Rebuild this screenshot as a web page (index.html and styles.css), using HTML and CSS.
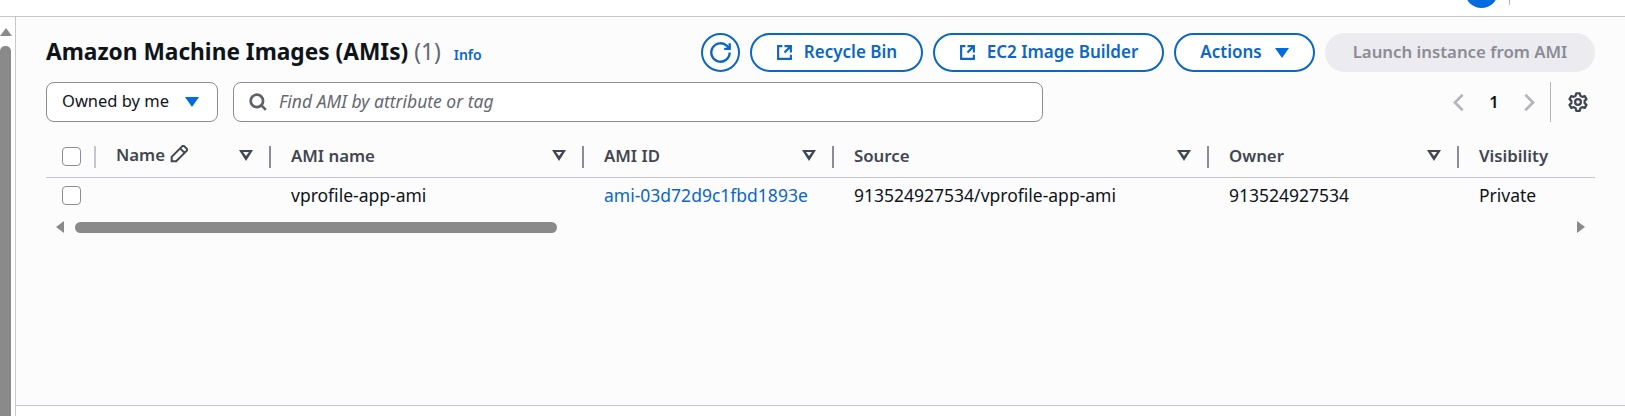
FILE: index.html
```html
<!DOCTYPE html>
<html lang="en">
    <head>
        <meta charset="UTF-8" />
        <meta name="viewport" content="width=device-width, initial-scale=1.0" />
        <title>Amazon Machine Images</title>
        <link rel="stylesheet" href="styles.css">
    </head>
    <body>
        <div class="topbar">
            <span class="avatar"></span>
            <span class="topbar-sep"></span>
        </div>

        <div class="content">
            <div class="page-scroll">
                <span class="arrow-up"></span>
                <span class="page-thumb"></span>
            </div>

            <div class="page">
                <main class="panel">
                    <div class="panel-head">
                        <h1 class="title">Amazon Machine Images (AMIs) <span class="count">(1)</span></h1>
                        <a class="info" href="#">Info</a>
                        <div class="actions">
                            <button class="btn btn-round" aria-label="Refresh">
                                <svg class="icon-refresh" viewBox="0 0 16 16"><path d="M15 8a7 7 0 1 1-2.100-5L15 5"/><path d="M15 1v4.200h-4.200"/></svg>
                            </button>
                            <button class="btn btn-recycle">
                                <svg class="icon" viewBox="0 0 16 16"><path d="M14 8V2H8M14 2 8 8M6 2H2v12h12v-4"/></svg>
                                Recycle Bin
                            </button>
                            <button class="btn btn-builder">
                                <svg class="icon" viewBox="0 0 16 16"><path d="M14 8V2H8M14 2 8 8M6 2H2v12h12v-4"/></svg>
                                EC2 Image Builder
                            </button>
                            <button class="btn btn-actions">Actions <span class="caret"></span></button>
                            <button class="btn btn-launch" disabled>Launch instance from AMI</button>
                        </div>
                    </div>

                    <div class="toolbar">
                        <button class="select">Owned by me <span class="caret"></span></button>
                        <div class="search">
                            <svg class="search-icon" viewBox="0 0 16 16"><circle cx="7" cy="7" r="5.500"/><path d="m11 11 4 4"/></svg>
                            <span class="search-text">Find AMI by attribute or tag</span>
                        </div>
                        <div class="pager">
                            <svg class="chevron" viewBox="0 0 16 16"><path d="M11.500 1.500 5 8l6.500 6.500"/></svg>
                            <span class="page-num">1</span>
                            <svg class="chevron" viewBox="0 0 16 16"><path d="M4.500 1.500 11 8l-6.500 6.500"/></svg>
                        </div>
                        <div class="settings">
                            <svg class="gear" viewBox="0 0 16 16"><path d="M6.600 1h2.800l.5 2 1.500.9 2-.6 1.400 2.400-1.500 1.400v1.800l1.500 1.400-1.400 2.400-2-.6-1.500.9-.5 2H6.600l-.5-2-1.500-.9-2 .6-1.400-2.400 1.500-1.400V7.100L1.200 5.700l1.400-2.400 2 .6 1.500-.9z" stroke-linejoin="round"/><circle cx="8" cy="8" r="2.300"/></svg>
                        </div>
                    </div>

                    <div class="table">
                        <div class="th th-check"><span class="checkbox"></span></div>
                        <div class="th th-name">
                            <span class="th-label">Name
                                <svg class="pencil" viewBox="0 0 16 16"><path d="M1.500 14.500v-4L10.800 1.200a1.400 1.400 0 0 1 2 0l2 2a1.400 1.400 0 0 1 0 2L5.500 14.500zM9 3l4 4"/></svg>
                            </span>
                            <span class="filter"></span>
                        </div>
                        <div class="th"><span class="th-label">AMI name</span><span class="filter"></span></div>
                        <div class="th"><span class="th-label">AMI ID</span><span class="filter"></span></div>
                        <div class="th"><span class="th-label">Source</span><span class="filter"></span></div>
                        <div class="th"><span class="th-label">Owner</span><span class="filter"></span></div>
                        <div class="th th-last"><span class="th-label">Visibility</span></div>

                        <div class="td td-check"><span class="checkbox"></span></div>
                        <div class="td"></div>
                        <div class="td">vprofile-app-ami</div>
                        <div class="td"><a class="link" href="#">ami-03d72d9c1fbd1893e</a></div>
                        <div class="td">913524927534/vprofile-app-ami</div>
                        <div class="td">913524927534</div>
                        <div class="td">Private</div>
                    </div>

                    <div class="table-scroll">
                        <span class="arrow-left"></span>
                        <div class="table-track"><span class="table-thumb"></span></div>
                        <span class="arrow-right"></span>
                    </div>
                </main>
            </div>
        </div>
    </body>
</html>
```

FILE: styles.css
```css
* {
    box-sizing: border-box;
}

body {
    margin: 0;
    height: 416px;
    overflow: hidden;
    display: flex;
    flex-direction: column;
    background: #fff;
    color: #0f141a;
    font-family: "Noto Sans", "Open Sans", sans-serif;
    font-size: 17.5px;
}

svg {
    fill: none;
    stroke: currentColor;
    stroke-width: 2;
}

/* top strip */
.topbar {
    height: 17px;
    flex: none;
    display: flex;
    justify-content: flex-end;
    padding-right: 115px;
    border-bottom: 1px solid #c6c6cd;
    overflow: hidden;
}
.avatar {
    width: 33px;
    height: 33px;
    margin-top: -25px;
    border-radius: 50%;
    background: #006ce0;
}
.topbar-sep {
    width: 1px;
    height: 5px;
    margin-left: 11px;
    background: #b4b4bb;
}

.content {
    flex: 1;
    min-height: 0;
    display: flex;
}

/* page scrollbar */
.page-scroll {
    width: 15px;
    flex: none;
    display: flex;
    flex-direction: column;
    padding-top: 11px;
    overflow: hidden;
}
.arrow-up {
    width: 0;
    height: 0;
    border-left: 6px solid transparent;
    border-right: 6px solid transparent;
    border-bottom: 8px solid #8a8a8a;
}
.page-thumb {
    width: 11px;
    flex: 1;
    margin-top: 10px;
    border-radius: 5px 5px 0 0;
    background: #8a8a8a;
}

.page {
    flex: 1;
    min-width: 0;
    border-left: 1px solid #c6c6cd;
}

.panel {
    height: 389px;
    padding: 16px 30px 0 30px;
    background: #fcfcfd;
    border-bottom: 1px solid #c6c6cd;
}

/* heading row */
.panel-head {
    display: flex;
    align-items: center;
    height: 39px;
}
.title {
    margin: 0;
    font-size: 22.7px;
    font-weight: 700;
    line-height: 37px;
    padding-bottom: 2px;
    white-space: nowrap;
}
.count {
    font-weight: 400;
    color: #656871;
}
.info {
    margin-left: 13px;
    margin-top: 3px;
    font-size: 14px;
    font-weight: 600;
    color: #0b67c2;
    text-decoration: none;
}
.actions {
    margin-left: auto;
    display: flex;
    gap: 10px;
}
.btn {
    height: 39px;
    padding: 0 0 3px;
    display: flex;
    align-items: center;
    justify-content: center;
    gap: 10px;
    border: 2px solid #0b67c2;
    border-radius: 20px;
    background: #fff;
    color: #0b67c2;
    font: 600 17px "Noto Sans", sans-serif;
    white-space: nowrap;
}
.btn-round {
    width: 39px;
    padding: 0;
    border-radius: 50%;
}
.btn-recycle {
    width: 173px;
}
.btn-builder {
    width: 231px;
}
.btn-actions {
    width: 141px;
    gap: 13px;
}
.btn-launch {
    width: 270px;
    border: none;
    background: #ebebf0;
    color: #8c8c94;
    font-size: 16.8px;
}
.btn .icon,
.btn .caret {
    margin-top: 3px;
}
.icon {
    width: 17px;
    height: 17px;
    margin-right: 1px;
}
.icon-refresh {
    width: 21px;
    height: 21px;
    stroke-width: 1.800;
}
.caret {
    width: 0;
    height: 0;
    border-left: 7px solid transparent;
    border-right: 7px solid transparent;
    border-top: 10px solid #006ce0;
}

/* filter row */
.toolbar {
    display: flex;
    align-items: center;
    height: 40px;
    margin-top: 10px;
}
.select {
    width: 172px;
    height: 40px;
    display: flex;
    align-items: center;
    gap: 16px;
    padding: 0 0 3px 15px;
    border: 1px solid #8c8c94;
    border-radius: 8px;
    background: #fff;
    color: #0f141a;
    font: 16.5px "Noto Sans", sans-serif;
    white-space: nowrap;
}
.select .caret {
    margin-top: 3px;
}
.search {
    width: 810px;
    height: 40px;
    margin-left: 15px;
    display: flex;
    align-items: center;
    gap: 12px;
    padding-left: 15px;
    border: 1px solid #8c8c94;
    border-radius: 8px;
    background: #fff;
}
.search-icon {
    width: 18px;
    height: 18px;
    color: #5f6168;
    stroke-width: 2.400;
}
.search-text {
    padding-bottom: 3px;
    font-style: italic;
    color: #656871;
}
.pager {
    margin-left: auto;
    display: flex;
    align-items: center;
    gap: 20px;
    padding-right: 11px;
    color: #b4b4bb;
}
.chevron {
    width: 19px;
    height: 19px;
    stroke-width: 2.200;
}
.page-num {
    font-weight: 600;
    font-size: 16.5px;
    color: #0f141a;
    width: 12px;
    padding-bottom: 2px;
    text-align: center;
}
.settings {
    height: 40px;
    width: 45px;
    display: flex;
    align-items: center;
    justify-content: flex-end;
    padding-right: 7px;
    border-left: 1px solid #b4b4bb;
}
.gear {
    width: 20px;
    height: 20px;
    color: #424650;
    stroke-width: 1.800;
}

/* table */
.table {
    margin-top: 9px;
    display: grid;
    grid-template-columns: 50px 175px 313px 250px 375px 250px 136px;
    grid-template-rows: 47px 39px;
}
.th {
    display: flex;
    align-items: center;
    justify-content: space-between;
    padding: 3px 18px 0 20px;
    border-bottom: 1px solid #c6c6cd;
    position: relative;
    font-weight: 600;
    font-size: 16.8px;
    color: #424650;
}
/* short divider at the right of each header cell */
.th::after {
    content: "";
    position: absolute;
    right: 0;
    top: 15px;
    width: 2px;
    height: 22px;
    background: #8c8c94;
}
.th-check {
    padding: 4px 0 0 16px;
}
.th-check::after {
    background: #c6c6cd;
}
.th-last::after {
    display: none;
}
.th-name .th-label {
    display: flex;
    align-items: center;
    gap: 5px;
    margin-top: -3px;
}
.pencil {
    width: 18px;
    height: 18px;
    stroke-width: 1.800;
}
.filter {
    width: 0;
    height: 0;
    position: relative;
    border-left: 7px solid transparent;
    border-right: 7px solid transparent;
    border-top: 11px solid #424650;
}
.filter::after {
    content: "";
    position: absolute;
    left: -3px;
    top: -9px;
    border-left: 3px solid transparent;
    border-right: 3px solid transparent;
    border-top: 4px solid #fcfcfd;
}
.checkbox {
    width: 19px;
    height: 19px;
    border: 1px solid #8c8c94;
    border-radius: 4px;
    background: #fff;
}
.td {
    display: flex;
    align-items: center;
    padding: 0 0 5px 20px;
    white-space: nowrap;
}
.td-check {
    padding-left: 16px;
}
.link {
    color: #0b67c2;
    text-decoration: none;
}

/* table horizontal scrollbar */
.table-scroll {
    margin-top: 4px;
    height: 12px;
    display: flex;
    align-items: center;
    padding-left: 10px;
}
.arrow-left {
    border-top: 6px solid transparent;
    border-bottom: 6px solid transparent;
    border-right: 8px solid #8a8a8a;
}
.arrow-right {
    border-top: 6px solid transparent;
    border-bottom: 6px solid transparent;
    border-left: 8px solid #8a8a8a;
    margin-right: 10px;
}
.table-track {
    flex: 1;
    height: 11px;
    padding-left: 11px;
}
.table-thumb {
    display: block;
    width: 482px;
    height: 11px;
    border-radius: 6px;
    background: #8a8a8a;
}
```
